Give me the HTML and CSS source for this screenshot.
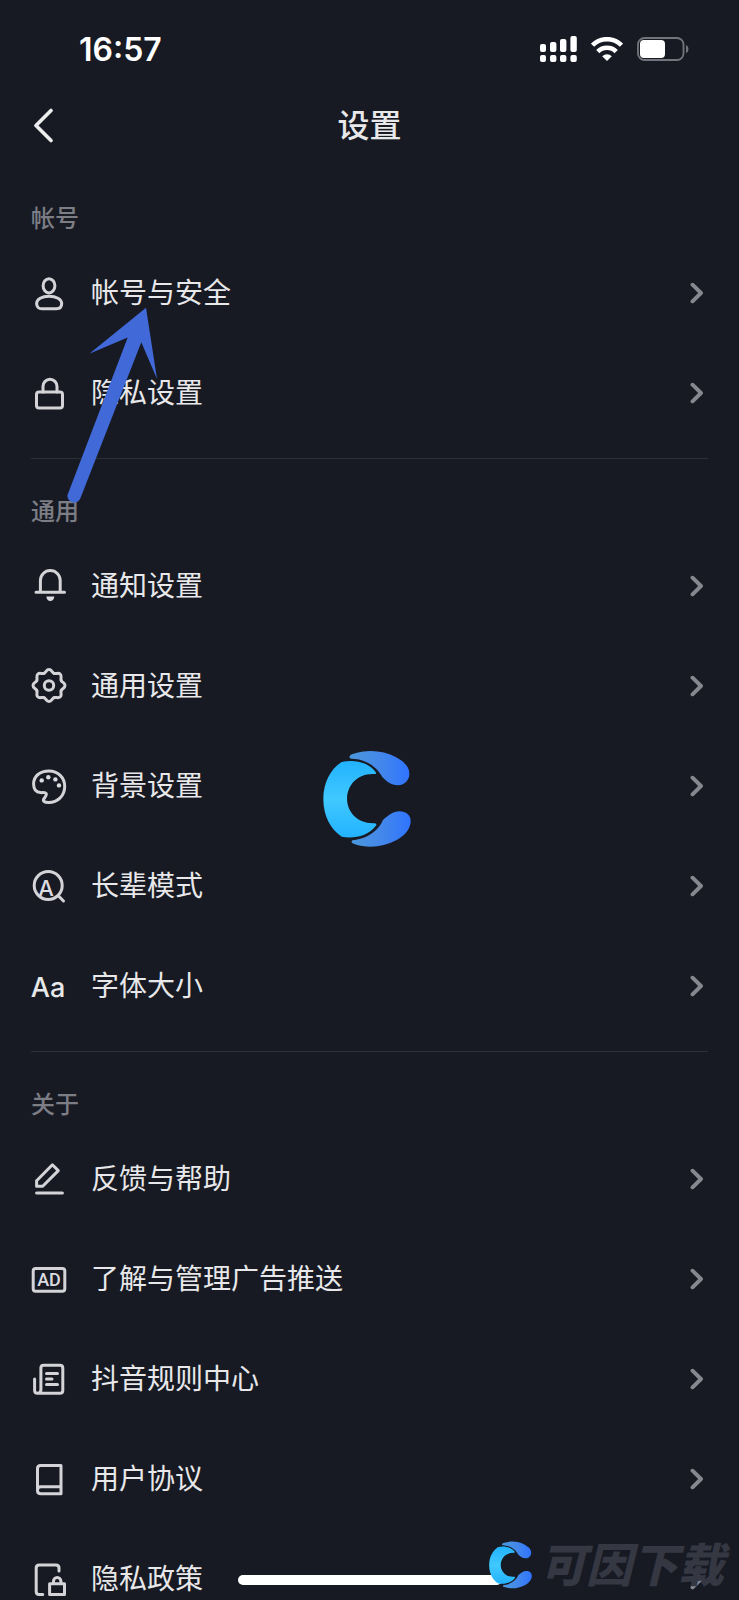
FILE: index.html
```html
<!DOCTYPE html>
<html lang="zh-CN">
<head>
<meta charset="utf-8">
<meta name="viewport" content="width=device-width, initial-scale=1">
<title>设置</title>
<link rel="stylesheet" href="styles.css">
</head>
<body>
<svg class="defs" aria-hidden="true">
  <defs>
    <linearGradient id="g-wing" x1="0" x2="1" y1="0" y2="0"><stop offset="0" stop-color="#4a97dc"/><stop offset=".5" stop-color="#4488ea"/><stop offset="1" stop-color="#2f74ff"/></linearGradient>
    <linearGradient id="g-body" x1="0" x2="0" y1="0" y2="1"><stop offset="0" stop-color="#22b2ff"/><stop offset=".5" stop-color="#40c9ff"/><stop offset="1" stop-color="#22b2ff"/></linearGradient>
    <symbol id="logo" viewBox="68 62 267 293">
      <path fill="url(#g-wing)" d="M150 85C146 80 150 75 158 72C200 58 250 60 290 82C318 98 330 112 330 132C330 152 315 167 295 167C275 167 260 155 248 142C236 118 205 90 165 87Q153 87 150 85Z"/>
      <path fill="url(#g-body)" d="M125 96C160 88 205 95 228 127Q231 133 224 133C175 130 141 165 141 208C141 250 175 285 225 282Q232 283 229 289C205 322 160 330 125 323C90 300 69 260 69 208C69 160 90 118 125 96Z"/>
      <path fill="url(#g-wing)" d="M157 334C152 339 156 343 163 345C200 358 250 356 290 334C320 318 334 295 334 275C334 258 320 246 300 246C280 246 268 258 250 272C238 300 210 325 165 333Z"/>
    </symbol>
    <symbol id="chev" viewBox="0 0 14 22"><path d="M2.500 2.700L11 11L2.500 19.300" fill="none" stroke="currentColor" stroke-width="3.900" stroke-linecap="round" stroke-linejoin="round"/></symbol>
    <path id="lobe" d="M-5.050 -12.200C-2.600 -13.200 -2.900 -16 0 -16C2.900 -16 2.600 -13.200 5.050 -12.200"/>
  </defs>
</svg>

<div class="app">
  <header>
    <div class="status">
      <span class="time">16:57</span>
      <div class="status-icons">
        <svg width="37" height="26" viewBox="0 0 37 26" fill="#fff" aria-hidden="true">
          <rect x="0" y="8" width="6" height="8" rx="2"/><rect x="10" y="6" width="6.400" height="10" rx="2"/><rect x="20" y="3" width="6.400" height="13" rx="2"/><rect x="30.400" y="0" width="6.400" height="16" rx="2"/>
          <rect x="0" y="19" width="6" height="7" rx="2"/><rect x="10" y="19" width="6.400" height="7" rx="2"/><rect x="20" y="19" width="6.400" height="7" rx="2"/><rect x="30.400" y="19" width="6.400" height="7" rx="2"/>
        </svg>
        <svg width="32" height="24" viewBox="0 0 32 24" aria-hidden="true">
          <g fill="none" stroke="#fff" stroke-width="4.600"><path d="M1.500 8.200A20.500 20.500 0 0 1 30.500 8.200"/><path d="M6.800 14.600A13 13 0 0 1 25.200 14.600"/></g>
          <path d="M16 24L11.200 19.200A7 7 0 0 1 20.800 19.200Z" fill="#fff"/>
        </svg>
        <svg width="52" height="24" viewBox="0 0 52 24" aria-hidden="true">
          <rect x="1" y="1" width="45.500" height="22" rx="6.500" fill="none" stroke="#73757c" stroke-width="1.800"/>
          <rect x="3" y="3" width="25" height="18" rx="4" fill="#fff"/>
          <path d="M49 8Q51.500 9 51.500 12T49 16Z" fill="#73757c"/>
        </svg>
      </div>
    </div>
    <nav class="bar">
      <button class="back" type="button" aria-label="返回">
        <svg width="20" height="36" viewBox="0 0 20 36"><path d="M18 2.500L3 17.500L18 32.500" fill="none" stroke="#ededf0" stroke-width="3.600" stroke-linecap="round" stroke-linejoin="round"/></svg>
      </button>
      <h1>设置</h1>
    </nav>
  </header>

  <main>
    <section>
      <h2>帐号</h2>
      <a class="row" href="#security">
        <svg class="icon" viewBox="0 0 36 36"><ellipse cx="18" cy="10.800" rx="5.900" ry="7.100"/><path d="M5.600 28.600C5.600 24 11 21.300 18 21.300S30.700 24 30.700 28.600C30.700 32 28.500 33.800 25.500 33.800H10.800C7.800 33.800 5.600 32 5.600 28.600Z"/></svg>
        <span>帐号与安全</span><svg class="chev"><use href="#chev"/></svg>
      </a>
      <a class="row" href="#privacy">
        <svg class="icon" viewBox="0 0 36 36"><rect x="5.500" y="17" width="26" height="16" rx="2.500"/><path d="M12 17V11.500A7 7.200 0 0 1 26 11.500V17"/></svg>
        <span>隐私设置</span><svg class="chev"><use href="#chev"/></svg>
      </a>
    </section>

    <section>
      <h2>通用</h2>
      <a class="row" href="#notify">
        <svg class="icon" viewBox="0 0 36 36"><path d="M5 24.300H33.500M9.400 24.300V12.500A9.900 9.900 0 0 1 29.200 12.500V24.300"/><path class="solid" d="M15.300 28.600H23.300Q22.800 33 19.300 33T15.300 28.600Z"/></svg>
        <span>通知设置</span><svg class="chev"><use href="#chev"/></svg>
      </a>
      <a class="row" href="#general">
        <svg class="icon" viewBox="0 0 36 36"><g transform="translate(18 17.500)"><use href="#lobe"/><use href="#lobe" transform="rotate(45)"/><use href="#lobe" transform="rotate(90)"/><use href="#lobe" transform="rotate(135)"/><use href="#lobe" transform="rotate(180)"/><use href="#lobe" transform="rotate(225)"/><use href="#lobe" transform="rotate(270)"/><use href="#lobe" transform="rotate(315)"/><circle r="4.700"/></g></svg>
        <span>通用设置</span><svg class="chev"><use href="#chev"/></svg>
      </a>
      <a class="row" href="#background">
        <svg class="icon" viewBox="0 0 36 36"><path d="M2.600 16C2.600 8 9 3 18 3C27 3 33.700 9.500 33.700 18.500C33.700 27.500 27 34.600 17.500 34.600C13 34.600 11.500 32.800 13 30.600C14.800 28.200 16 27 15.200 25.600C14.300 24 12 24.800 9.500 24.600C5 24.200 2.600 21 2.600 16Z"/><g class="solid"><circle cx="10.700" cy="12.400" r="2.200"/><circle cx="17.300" cy="9.200" r="2.200"/><circle cx="24.400" cy="11.400" r="2.200"/><circle cx="28" cy="17.400" r="2.200"/></g></svg>
        <span>背景设置</span><svg class="chev"><use href="#chev"/></svg>
      </a>
      <a class="row" href="#elder">
        <svg class="icon" viewBox="0 0 36 36"><circle cx="17.200" cy="17.500" r="14"/><path d="M27.300 27.800L32.500 33"/><text class="glyph glyph-a" x="15" y="28">A</text></svg>
        <span>长辈模式</span><svg class="chev"><use href="#chev"/></svg>
      </a>
      <a class="row" href="#font">
        <svg class="icon" viewBox="0 0 36 36"><text class="glyph glyph-aa" x="17" y="29">Aa</text></svg>
        <span>字体大小</span><svg class="chev"><use href="#chev"/></svg>
      </a>
    </section>

    <section>
      <h2>关于</h2>
      <a class="row" href="#help">
        <svg class="icon" viewBox="0 0 36 36"><path d="M5.600 25.200V19.700L21.400 3.800L27.300 9.600L11.700 25.200ZM5.600 32H31.400"/></svg>
        <span>反馈与帮助</span><svg class="chev"><use href="#chev"/></svg>
      </a>
      <a class="row" href="#ads">
        <svg class="icon" viewBox="0 0 36 36"><rect x="2.200" y="7.400" width="31.600" height="22.800" rx="2.500"/><text class="glyph glyph-ad" x="18" y="25">AD</text></svg>
        <span>了解与管理广告推送</span><svg class="chev"><use href="#chev"/></svg>
      </a>
      <a class="row" href="#rules">
        <svg class="icon" viewBox="0 0 36 36"><path d="M9.900 28.800V7Q9.900 4.200 12.700 4.200H29Q31.800 4.200 31.800 7V29.500Q31.800 32.300 29 32.300H6.600Q3.600 32.300 3.600 29.300V18M9.900 28.800Q9.900 32 6.700 32.300M15.500 12.500H26.500M15.500 18H21M15.500 23.500H26.500"/></svg>
        <span>抖音规则中心</span><svg class="chev"><use href="#chev"/></svg>
      </a>
      <a class="row" href="#terms">
        <svg class="icon" viewBox="0 0 36 36"><path d="M30 4.500H9.500Q6.500 4.500 6.500 7.500V29.500Q6.500 32.800 9.800 32.800H30ZM6.500 29Q6.500 25.700 9.800 25.700H30"/></svg>
        <span>用户协议</span><svg class="chev"><use href="#chev"/></svg>
      </a>
      <a class="row" href="#policy">
        <svg class="icon" viewBox="0 0 36 36"><path d="M11.800 33.500H8.200Q5.200 33.500 5.200 30.500V7Q5.200 4 8.200 4H25Q28 4 28 7V10M19.500 22.800H33.500V33.500H18.600V22.800ZM22.500 22.800V20.200A3.700 3.700 0 0 1 29.900 20.200V22.800"/></svg>
        <span>隐私政策</span><svg class="chev"><use href="#chev"/></svg>
      </a>
    </section>

    <svg class="pointer" viewBox="67 307 92 198" aria-hidden="true"><path fill="#4169d7" d="M146 307.700L157 379L141.300 342.300L80.300 498.500A6.700 6.700 0 0 1 67.500 495L127.700 337.500L89.300 353.700Z"/></svg>
  </main>

  <div class="home"></div>
  <svg class="center-logo" aria-hidden="true"><use href="#logo"/></svg>
  <div class="watermark"><svg aria-hidden="true"><use href="#logo"/></svg><span>可因下载</span></div>
</div>
</body>
</html>
```
FILE: styles.css
```css
* { box-sizing: border-box; }

body {
  margin: 0;
  background: #171a23;
  color: #e8e8ea;
  font-family: Inter, "Noto Sans CJK SC", sans-serif;
}

.defs { position: absolute; width: 0; height: 0; }

.app {
  position: relative;
  display: flex;
  flex-direction: column;
  height: 100vh;
  overflow: hidden;
}

.status {
  display: flex;
  align-items: center;
  justify-content: space-between;
  height: 98px;
  padding: 0 50px 0 79px;
}

.time { color: #fff; font-size: 32px; font-weight: 600; }

.status-icons { display: flex; align-items: center; gap: 14px; }

.bar {
  display: grid;
  grid-template-columns: 1fr auto 1fr;
  align-items: center;
  height: 56px;
  padding: 0 33px;
}

.back {
  justify-self: start;
  padding: 0;
  border: 0;
  background: none;
  line-height: 0;
}

h1 {
  margin: 0;
  font-size: 32px;
  font-weight: 500;
  line-height: 48px;
}

main {
  position: relative;
  flex: 1;
  min-height: 0;
  padding: 12px 31px 0;
  overflow-y: auto;
  scrollbar-width: none;
}

section { padding: 33px 0 15px; }
section:not(:last-of-type) { border-bottom: 1px solid #2d3038; }

h2 {
  margin: 0 0 4px;
  color: #7c7d85;
  font-size: 24px;
  font-weight: 500;
  line-height: 40px;
}

.row {
  display: flex;
  align-items: center;
  gap: 24px;
  height: 100px;
  color: inherit;
  font-size: 28px;
  line-height: 40px;
  text-decoration: none;
}

.row span { flex: 1; }

.icon {
  flex: none;
  width: 36px;
  height: 36px;
  overflow: visible;
  fill: none;
  stroke: #d4d4d8;
  stroke-width: 3;
  stroke-linecap: round;
  stroke-linejoin: round;
}

.solid, .glyph { fill: #dcdce0; stroke: none; }
.glyph { text-anchor: middle; font-weight: 500; }
.glyph-a { font-size: 22px; }
.glyph-aa { font-size: 27px; fill: #e8e8ea; }
.glyph-ad { font-family: Roboto, sans-serif; font-size: 18px; }

.chev {
  flex: none;
  width: 14px;
  height: 22px;
  margin-right: 4px;
  color: #86888f;
}

.pointer {
  position: absolute;
  top: 153px;
  left: 67px;
  width: 92px;
  height: 198px;
  pointer-events: none;
}

.home {
  position: absolute;
  bottom: 15px;
  left: 50%;
  width: 264px;
  height: 10px;
  margin-left: -132px;
  border-radius: 5px;
  background: #fff;
}

.center-logo {
  position: absolute;
  top: 50%;
  left: 50%;
  width: 88px;
  height: 98px;
  margin: -50px 0 0 -47px;
}

.watermark {
  position: absolute;
  right: 15px;
  bottom: 11px;
  display: flex;
  align-items: center;
  gap: 8px;
  color: #353742;
  font-size: 46px;
  font-style: italic;
  font-weight: 900;
  line-height: 48px;
}

.watermark svg { width: 43px; height: 48px; }
```
